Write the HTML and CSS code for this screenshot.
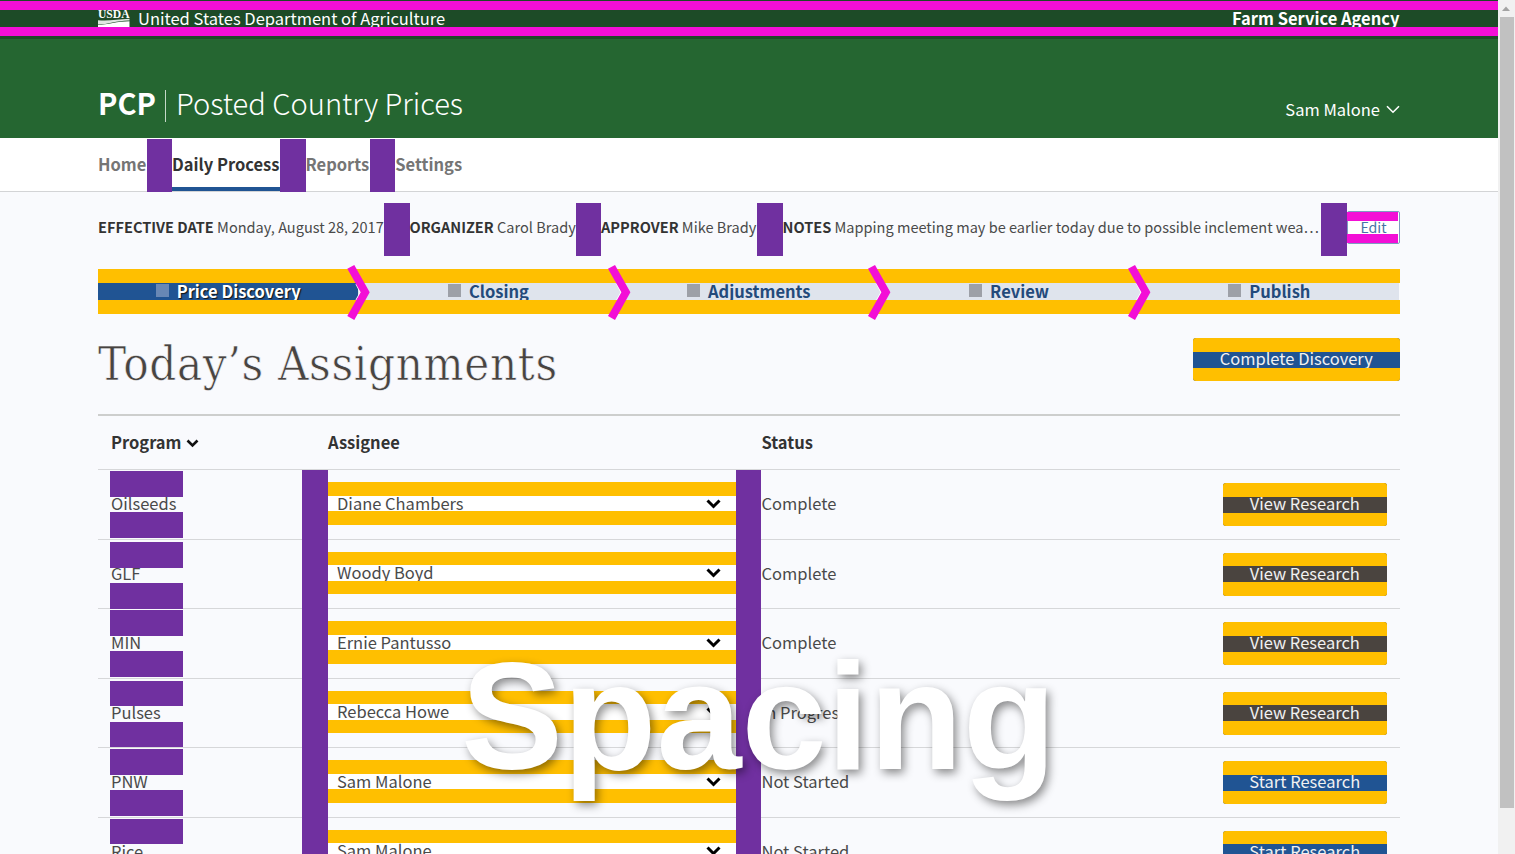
FILE: index.html
```html
<!DOCTYPE html>
<html lang="en">
<head>
<meta charset="utf-8">
<title>PCP | Posted Country Prices</title>
<link rel="stylesheet" href="styles.css">
</head>
<body>
<div class="window">
  <div class="page">
    <div class="agency-bar">
      <div class="wrap agency-row">
        <div class="agency">
          <svg class="usda" width="32" height="20" viewBox="0 0 32 20"><text x="0" y="9.5" class="usda-text" textLength="31.5" lengthAdjust="spacingAndGlyphs">USDA</text><path d="M0 12.2C10 13 20 11.6 31.5 10.8V12.4C20 12 9 16.6 0 16.4Z" fill="#dfe8e1"/><path d="M0 17C9 16.6 20 13.2 31.5 13.2V20H0Z" fill="#fff"/></svg>
          <span class="dept">United States Department of Agriculture</span>
        </div>
        <span class="fsa">Farm Service Agency</span>
      </div>
    </div>
    <header class="brand-bar">
      <div class="wrap brand-row">
        <div class="brand"><b>PCP</b><span class="bar"></span><span class="brand-name">Posted Country Prices</span></div>
        <div class="user"><span>Sam Malone</span><svg width="14" height="9" viewBox="0 0 14 9"><path d="M1 1.2 7 7.2 13 1.2" fill="none" stroke="#fff" stroke-width="1.6"/></svg></div>
      </div>
    </header>
    <nav class="nav">
      <div class="wrap nav-row">
        <a class="n1">Home</a><i class="gap"></i><a class="n2 active">Daily Process</a><i class="gap"></i><a class="n3">Reports</a><i class="gap"></i><a class="n4">Settings</a>
      </div>
    </nav>
    <main class="wrap">
      <div class="meta">
        <div class="m1"><b>EFFECTIVE DATE</b> <span>Monday, August 28, 2017</span></div><i class="gap"></i>
        <div class="m2"><b>ORGANIZER</b> <span>Carol Brady</span></div><i class="gap"></i>
        <div class="m3"><b>APPROVER</b> <span>Mike Brady</span></div><i class="gap"></i>
        <div class="m4"><b>NOTES</b> <span>Mapping meeting may be earlier today due to possible inclement wea…</span></div><i class="gap"></i>
        <button class="edit">Edit</button>
      </div>
      <div class="steps stripes">
        <div class="step current"><i></i><span>Price Discovery</span></div>
        <div class="step"><i></i><span>Closing</span></div>
        <div class="step"><i></i><span>Adjustments</span></div>
        <div class="step"><i></i><span>Review</span></div>
        <div class="step"><i></i><span>Publish</span></div>
        <svg class="chevrons" width="1302" height="56" viewBox="0 0 1302 56"><defs><g id="chev"><path d="M8.8 19 13.2 27.3 8.8 35" fill="none" stroke="#fff" stroke-width="1.4"/><path d="M0 3.7 7 0 22.4 27.3 7 55 0 51 13.4 27.3Z" fill="#f30fd6"/></g></defs><use href="#chev" x="249.3"/><use href="#chev" x="510"/><use href="#chev" x="770"/><use href="#chev" x="1030"/></svg>
      </div>
      <div class="title-row">
        <h1>Today’s Assignments</h1>
        <button class="btn stripes blue wide"><span>Complete Discovery</span></button>
      </div>
      <div class="table">
        <div class="thead">
          <div>Program <svg class="sort" width="13" height="9" viewBox="0 0 13 9"><path d="M1.5 1.5 6.5 6.5 11.5 1.5" fill="none" stroke="#111" stroke-width="2.6"/></svg></div><div>Assignee</div><div>Status</div><div></div>
        </div>
        <div class="tbody">
          <div class="row"><div class="prog">Oilseeds</div><div class="select stripes"><span>Diane Chambers</span><svg width="15" height="10" viewBox="0 0 15 10"><path id="arrow" d="M1.5 1.5 7.5 7.5 13.5 1.5" fill="none" stroke="#000" stroke-width="3"/></svg></div><div class="status">Complete</div><button class="btn stripes dark"><span>View Research</span></button></div>
          <div class="row"><div class="prog">GLF</div><div class="select stripes"><span>Woody Boyd</span><svg width="15" height="10"><use href="#arrow"/></svg></div><div class="status">Complete</div><button class="btn stripes dark"><span>View Research</span></button></div>
          <div class="row"><div class="prog">MIN</div><div class="select stripes"><span>Ernie Pantusso</span><svg width="15" height="10"><use href="#arrow"/></svg></div><div class="status">Complete</div><button class="btn stripes dark"><span>View Research</span></button></div>
          <div class="row"><div class="prog">Pulses</div><div class="select stripes"><span>Rebecca Howe</span><svg width="15" height="10"><use href="#arrow"/></svg></div><div class="status">In Progress</div><button class="btn stripes dark"><span>View Research</span></button></div>
          <div class="row"><div class="prog">PNW</div><div class="select stripes"><span>Sam Malone</span><svg width="15" height="10"><use href="#arrow"/></svg></div><div class="status">Not Started</div><button class="btn stripes blue"><span>Start Research</span></button></div>
          <div class="row"><div class="prog">Rice</div><div class="select stripes"><span>Sam Malone</span><svg width="15" height="10"><use href="#arrow"/></svg></div><div class="status">Not Started</div><button class="btn stripes blue"><span>Start Research</span></button></div>
        </div>
      </div>
    </main>
  </div>
  <div class="scrollbar"><svg width="16" height="17" viewBox="0 0 16 17"><path d="M4 11 8 6.5 12 11Z" fill="#a3a3a3"/></svg><div class="thumb"></div></div>
  <div class="caption">Spacing</div>
</div>
</body>
</html>
```

FILE: styles.css
```css
* { box-sizing: border-box; }
body { margin: 0; font-family: "Noto Sans CJK SC", "Noto Sans", sans-serif; color: #4a4a4a; background: #f9fafd; overflow: hidden; font-size: 16.5px; }
button { font-family: inherit; padding: 0; border: 0; }
.window { position: relative; display: flex; width: 1515px; height: 854px; overflow: hidden; background: #f9fafd; }
.page { width: 1498px; height: 854px; overflow: hidden; }
.wrap { width: 1301.5px; margin-left: 98px; }
.gap { flex: none; width: 25.5px; background: #7030a0; }

.agency-bar { position: relative; height: 39px; background: #1d4b27; color: #fff; }
.agency-bar::before, .agency-bar::after { content: ""; position: absolute; left: 0; right: 0; height: 9.3px; background: #f30fd6; }
.agency-bar::before { top: 1px; }
.agency-bar::after { top: 27px; }
.agency-row { display: flex; justify-content: space-between; height: 38px; line-height: 37px; }
.agency { display: flex; gap: 8px; }
.usda { margin-top: 8px; }
.usda-text { font: bold 13px "Liberation Serif", serif; fill: #fff; }
.fsa { font-weight: 700; }

.brand-bar { height: 99px; background: #256631; color: #fff; }
.brand-row { display: flex; justify-content: space-between; }
.brand { display: flex; align-items: center; font-size: 29.1px; line-height: 40px; margin-top: 43px; height: 40px; }
.bar { width: 1.5px; height: 32px; background: #c5d8c8; margin: 8px 9.5px 0 9px; }
.brand-name { font-weight: 300; }
.user { display: flex; align-items: center; gap: 5.5px; height: 30px; margin-top: 55px; line-height: 30px; }

.nav { height: 54px; background: #fff; border-bottom: 1px solid #d3d4d6; }
.nav-row { display: flex; height: 54px; padding-top: 1px; font-weight: 700; line-height: 51px; color: #757575; }
.nav-row a { white-space: nowrap; }
.n1 { width: 48.5px; } .n2 { width: 108px; } .n3 { width: 64.3px; }
.active { color: #333; border-bottom: 4px solid #205493; height: 52px; }

.meta { display: flex; height: 53px; margin-top: 11px; font-size: 14.56px; line-height: 48px; white-space: nowrap; }
.meta b { color: #333; }
.m1 { width: 286px; } .m2 { width: 166px; } .m3 { width: 156px; } .m4 { width: 538.5px; }
.edit { position: relative; flex: 1; height: 33px; margin-top: 8px; background: #fff; border: 1px solid #7d9cc0; border-radius: 2px; color: #4773a5; font-size: 14.2px; line-height: 28px; padding: 0 0 2px 1px; }
.edit::before, .edit::after { content: ""; position: absolute; left: -1px; right: 1px; height: 9.3px; background: #f30fd6; }
.edit::before { top: 0; } .edit::after { bottom: 0; }

.stripes { position: relative; }
.stripes::before, .stripes::after { content: ""; position: absolute; left: 0; right: 0; height: 13.5px; background: #ffbf00; }
.stripes::before { top: 0; } .stripes::after { bottom: 0; }

.steps { display: flex; height: 44.5px; margin-top: 13px; }
.step { flex: 1; display: flex; justify-content: center; align-items: center; gap: 8px; background: #dfe4ed; color: #234a7b; font-weight: 700; line-height: 40px; }
.step span { margin-bottom: 1px; }
.step i { width: 13px; height: 13px; margin-bottom: 1px; background: #9da0a7; }
.step.current { background: #205493; color: #fff; text-shadow: 1px 1px 1px #111; }
.step.current i { background: #6888b5; }
.chevrons { position: absolute; left: 0; top: -4px; z-index: 2; }

.title-row { display: flex; justify-content: space-between; height: 100.5px; }
h1 { margin: 20px 0 0; font: 400 47px/60px "DejaVu Serif Condensed", "DejaVu Serif", serif; letter-spacing: .65px; color: #484441; -webkit-text-stroke: .6px #f9fafd; white-space: nowrap; }
.btn { height: 43px; width: 163.5px; border-radius: 3px; overflow: hidden; color: #f1f1f1; font-size: 16.5px; line-height: 39px; padding-bottom: 2px; }
.wide { width: 206.5px; margin-top: 24.5px; }
.blue { background: #205493; }
.dark { background: #4a443f; }

.table { border-top: 2px solid #cdcecd; }
.thead, .row { display: grid; grid-template-columns: 217px 407.5px 1fr 163.5px; padding: 0 13px; column-gap: 0; }
.thead { height: 54px; line-height: 53px; border-bottom: 1px solid #d6d7d9; font-weight: 700; color: #333; }
.thead div:nth-child(3) { padding-left: 26px; }
.sort { margin-left: 1px; vertical-align: 1px; }
.tbody { position: relative; }
.tbody::before, .tbody::after { content: ""; position: absolute; top: 0; bottom: 0; width: 25.5px; background: #7030a0; }
.tbody::before { left: 204.3px; } .tbody::after { left: 637.6px; }
.row { height: 69.5px; border-bottom: 1px solid #d6d7d9; line-height: 67px; }
.select { height: 42.7px; margin-top: 12px; background: #fff; display: flex; justify-content: space-between; align-items: center; padding: 0 15px 0 9px; line-height: 40px; }
.select span { margin-bottom: 1.4px; }
.select svg { margin-top: 1px; }
.status { padding-left: 26px; }
.row .btn { margin-top: 13px; }
.prog { position: relative; --o: 1px; }
.prog::before, .prog::after { content: ""; position: absolute; left: -1px; width: 73px; height: 25.5px; background: #7030a0; }
.prog::before { top: var(--o); } .prog::after { top: calc(var(--o) + 41px); }
.row:nth-child(2) .prog { --o: 2.5px; }
.row:nth-child(4) .prog { --o: 2px; }

.scrollbar { width: 17px; background: #f1f1f1; }
.scrollbar svg { display: block; }
.thumb { height: 791px; margin: 0 1px 0 2px; background: #c1c1c1; }
.caption { position: absolute; left: 461px; top: 630px; z-index: 5; font: bold 153px/171px "Liberation Sans", Arial, sans-serif; color: #fff; text-shadow: 3px 4px 10px rgba(0,0,0,.45); }
```
